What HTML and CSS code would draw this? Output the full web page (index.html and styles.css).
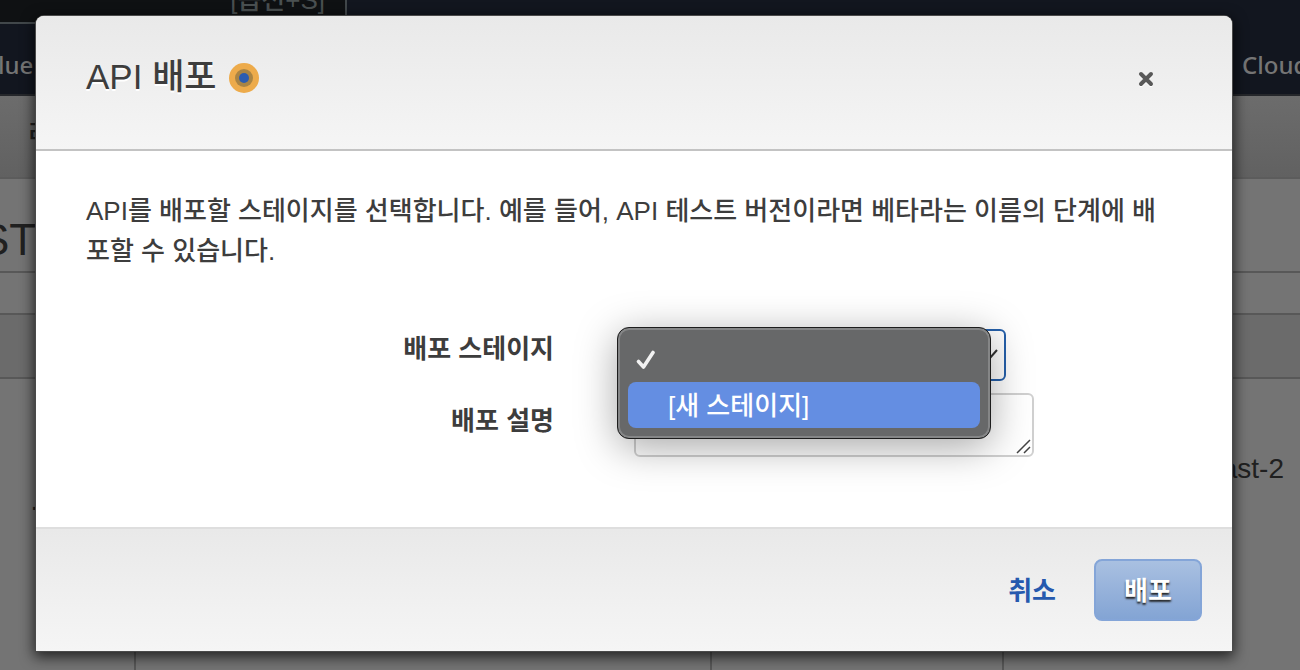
FILE: index.html
```html
<!DOCTYPE html>
<html lang="ko">
<head>
<meta charset="utf-8">
<title>API 배포</title>
<link rel="stylesheet" href="styles.css">
</head>
<body>
<div class="page">
  <div class="topbar">
    <div class="search">[옵션+S]</div>
    <div class="services"><span>lue</span><span class="service-end">Cloud</span></div>
  </div>
  <div class="crumbs">리</div>
  <div class="title">ST</div>
  <div class="spacer"></div>
  <div class="table-head"></div>
  <div class="columns">
    <div class="col col-id"><span>-</span></div>
    <div class="col col-name"></div>
    <div class="col col-type"></div>
    <div class="col col-host"><span>ast-2</span></div>
  </div>
</div>

<div class="dialog" role="dialog" aria-labelledby="dialog-title">
  <header class="dialog-header">
    <h1 class="dialog-title" id="dialog-title">API 배포</h1>
    <svg class="beacon" viewBox="0 0 30 30" aria-hidden="true">
      <circle cx="15" cy="15" r="15" fill="#edab4b"/>
      <circle cx="15" cy="15" r="9" fill="#a98444"/>
      <circle cx="15" cy="15" r="5" fill="#2b5cb0"/>
    </svg>
    <button class="close" type="button" aria-label="닫기">
      <svg viewBox="0 0 16 18" aria-hidden="true">
        <path d="M3 6l10 10M13 6L3 16" stroke="#fff" stroke-width="4" stroke-linecap="round"/>
        <path d="M3 5l10 10M13 5L3 15" stroke="#585858" stroke-width="4" stroke-linecap="round"/>
      </svg>
    </button>
  </header>
  <form class="dialog-body">
    <p class="intro">API를 배포할 스테이지를 선택합니다. 예를 들어, API 테스트 버전이라면 베타라는 이름의 단계에 배포할 수 있습니다.</p>
    <div class="fields">
      <label class="label" for="stage">배포 스테이지</label>
      <div class="control">
        <select class="select" id="stage"><option></option><option>[새 스테이지]</option></select>
        <svg class="chevron" viewBox="0 0 16 10" aria-hidden="true"><path d="M1 1l7 8 7-8" fill="none" stroke="#333" stroke-width="2"/></svg>
        <div class="menu" role="listbox" aria-label="배포 스테이지">
          <div class="option" role="option" aria-selected="true">
            <svg class="check" viewBox="0 0 20 20" aria-hidden="true"><path d="M2.500 11.500L7.500 17 17 2.500" fill="none" stroke="#f2f2f2" stroke-width="3.600" stroke-linecap="round" stroke-linejoin="round"/></svg>
          </div>
          <div class="option option-active" role="option" aria-selected="false">[새 스테이지]</div>
        </div>
      </div>
      <label class="label label-area" for="description">배포 설명</label>
      <div class="area">
        <textarea class="textarea" id="description"></textarea>
        <svg class="grip" viewBox="0 0 16 16" aria-hidden="true"><path d="M1 14L14 1M8 14l6-6" stroke="#444" stroke-width="1.500"/></svg>
      </div>
    </div>
  </form>
  <footer class="dialog-footer">
    <button class="cancel" type="button">취소</button>
    <button class="deploy" type="submit">배포</button>
  </footer>
</div>
</body>
</html>
```
FILE: styles.css
```css
* { box-sizing: border-box; }
body {
  margin: 0;
  min-height: 100vh;
  overflow: hidden;
  background: #747474;
  color: #3d3d3d;
  font-family: "Liberation Sans", "Noto Sans CJK KR", sans-serif;
  font-size: 26px;
  font-weight: 500;
}
button, select, textarea { font: inherit; }

.page {
  display: flex;
  flex-direction: column;
  height: 100vh;
  color: #202020;
}
.topbar {
  height: 96px;
  background: #12161f;
  border-bottom: 2px solid #25272b;
}
.search {
  width: 347px;
  height: 24px;
  padding-right: 20px;
  background: #0f1113;
  border: solid #41474a;
  border-width: 0 2px 2px 0;
  color: #4a5051;
  font-size: 26px;
  line-height: 0;
  text-align: right;
}
.services {
  display: flex;
  justify-content: space-between;
  padding-top: 24px;
  color: #757575;
  font-family: "Noto Sans", sans-serif;
  font-size: 24px;
  line-height: 34px;
}
.services span:first-child { margin-left: -2px; }
.service-end { width: 58px; white-space: nowrap; }
.crumbs {
  height: 83px;
  padding-left: 28px;
  background: linear-gradient(#6c6c6c, #616161);
  border-bottom: 2px solid #5c5c5c;
  line-height: 76px;
}
.title {
  width: 100%;
  height: 94px;
  border-bottom: 2px solid #585858;
  font-size: 44px;
  line-height: 122px;
  text-indent: -20px;
}
.spacer { height: 42px; border-bottom: 2px solid #585858; }
.table-head { height: 64px; background: #6b6b6b; border-bottom: 2px solid #585858; }
.columns {
  display: grid;
  grid-template-columns: 136px 576px 292px 1fr;
  flex: 1;
}
.col:not(:last-child) { border-right: 2px solid #585858; }
.col-id { padding: 112px 0 0 32px; font-weight: bold; }
.col-host { padding: 74px 16px 0 0; font-size: 28px; text-align: right; }

.dialog {
  position: absolute;
  top: 16px;
  left: 36px;
  right: 68px;
  background: #fff;
  border-radius: 8px 8px 0 0;
  box-shadow: 0 0 0 1px #4a4a4a, 0 4px 14px 2px rgba(0, 0, 0, .7);
}
.dialog-header {
  display: flex;
  align-items: center;
  gap: 12px;
  height: 135px;
  padding: 0 76px 10px 50px;
  background: linear-gradient(#e9e9e9, #f5f5f5);
  border-bottom: 2px solid #c3c3c3;
  border-radius: 8px 8px 0 0;
}
.dialog-title {
  margin: 0;
  padding-bottom: 2px;
  font-size: 35px;
  font-weight: 500;
  line-height: 48px;
  text-shadow: 0 2px 0 #fff;
}
.beacon { width: 30px; height: 30px; }
.close {
  display: flex;
  margin-left: auto;
  padding: 2px;
  border: 0;
  background: none;
}
.close svg { width: 16px; height: 18px; }

.dialog-body { padding: 40px 50px 70px; }
.intro { margin: 0 4px 0 0; line-height: 40px; }
.fields {
  display: grid;
  grid-template-columns: 468px 1fr;
  column-gap: 80px;
  row-gap: 12px;
  margin-top: 58px;
}
.label {
  font-weight: bold;
  line-height: 40px;
  text-align: right;
}
.label-area { line-height: 56px; }
.control { position: relative; width: 372px; height: 52px; }
.select {
  appearance: none;
  width: 100%;
  height: 52px;
  background: #fff;
  border: 2px solid #2560ab;
  border-radius: 6px;
}
.chevron { position: absolute; top: 20px; right: 8px; width: 16px; height: 10px; }
.menu {
  position: absolute;
  top: -2px;
  left: -17px;
  z-index: 2;
  width: 374px;
  padding: 8px 10px 10px;
  background: #676869;
  border: 1px solid #1d1d1d;
  border-radius: 12px;
  box-shadow: inset 0 0 0 2px #858687, 0 8px 40px rgba(0, 0, 0, .35);
}
.option {
  height: 46px;
  padding-left: 40px;
  border-radius: 8px;
  color: #fff;
  line-height: 48px;
}
.option:first-child { padding: 14px 0 0 8px; line-height: 1; }
.option-active { background: #648ee2; }
.check { display: block; width: 20px; height: 20px; }
.area { position: relative; width: 400px; height: 64px; }
.textarea {
  display: block;
  width: 100%;
  height: 64px;
  border: 2px solid #d0d0d0;
  border-radius: 6px;
  resize: none;
}
.grip { position: absolute; right: 2px; bottom: 2px; width: 16px; height: 16px; }

.dialog-footer {
  display: flex;
  align-items: center;
  justify-content: flex-end;
  gap: 38px;
  height: 124px;
  padding: 0 30px;
  background: linear-gradient(#e9e9e9, #f5f5f5);
  border-top: 2px solid #dedede;
}
.cancel {
  padding: 0 0 4px;
  border: 0;
  background: none;
  color: #2659ae;
  font-weight: bold;
}
.deploy {
  width: 108px;
  height: 62px;
  padding: 0 0 4px;
  border: 2px solid #84a5d8;
  border-radius: 8px;
  background: linear-gradient(#a9c0e1, #83a4d4);
  color: #fff;
  font-weight: bold;
  text-shadow: 0 2px 2px #222;
}
```
